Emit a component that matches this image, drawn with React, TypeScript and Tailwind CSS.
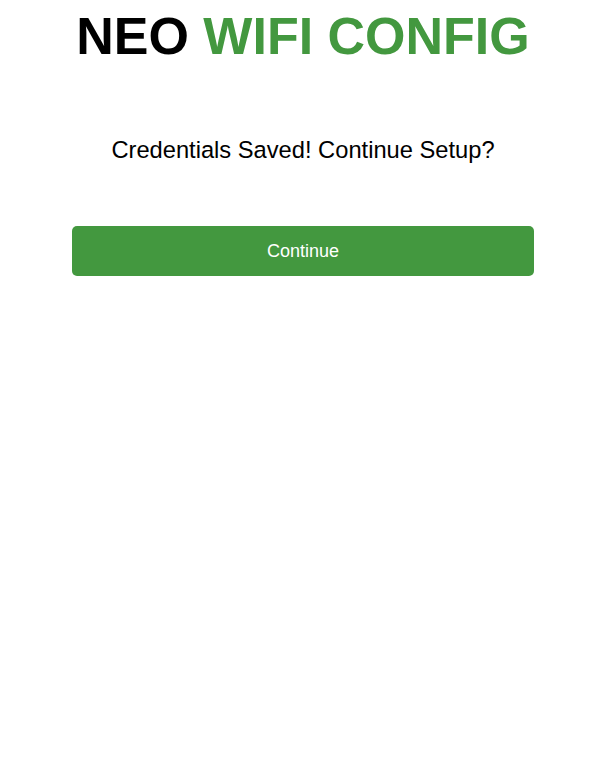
export default function App() {
  return (
    <div className="min-h-[776px] bg-white" style={{ fontFamily: '"Liberation Sans", Arial, sans-serif' }}>
      <div className="w-[606px] flex flex-col items-center">
        <h1 className="mt-[6px] text-[52px] leading-[60px] font-bold text-black">
          NEO <span className="text-[#43983f]">WIFI CONFIG</span>
        </h1>
        <p className="mt-[70px] text-[23.7px] leading-[28px] text-black">Credentials Saved! Continue Setup?</p>
        <button className="mt-[62px] w-[462px] h-[50px] rounded-[5px] bg-[#43983f] text-white text-[18px]">
          Continue
        </button>
      </div>
    </div>
  );
}
